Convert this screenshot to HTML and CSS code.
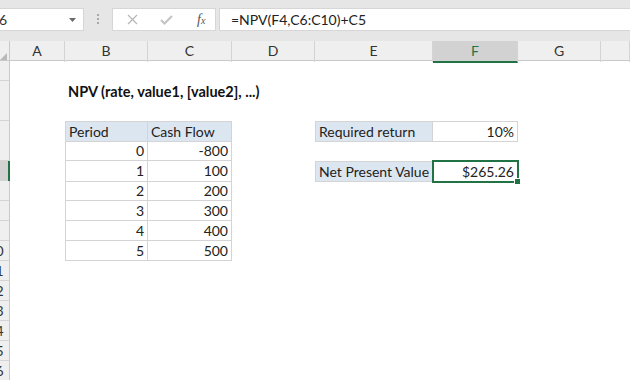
FILE: index.html
```html
<!DOCTYPE html>
<html>
<head>
  <meta charset="utf-8">
  <link rel="stylesheet" href="styles.css">
</head>
<body>
  <div class="toolbar">
    <div class="namebox">
      <span>F6</span>
      <svg class="drop" width="7" height="4" viewBox="0 0 7 4"><path d="M0 0h7L3.5 4z" fill="#6a6a6a"/></svg>
    </div>
    <div class="grip">
      <i></i><i></i><i></i>
    </div>
    <div class="fn-buttons">
      <svg width="11" height="11" viewBox="0 0 11 11"><path d="M1 1l9 9M10 1l-9 9" stroke="#b8b8b8" stroke-width="1.3" fill="none"/></svg>
      <svg width="13" height="10" viewBox="0 0 13 10"><path d="M1 5l3.5 3.5L12 1" stroke="#c2c2c2" stroke-width="2" fill="none"/></svg>
      <span class="fx">f<small>x</small></span>
    </div>
    <div class="formula">=NPV(F4,C6:C10)+C5</div>
  </div>

  <div class="sheet">
    <div class="row colheads">
      <div class="corner"><svg width="7" height="7" viewBox="0 0 7 7"><path d="M7 0v7H0z" fill="#b9b9b9"/></svg></div>
      <div class="ch">A</div>
      <div class="ch">B</div>
      <div class="ch">C</div>
      <div class="ch">D</div>
      <div class="ch">E</div>
      <div class="ch selected">F</div>
      <div class="ch">G</div>
      <div class="ch"></div>
    </div>

    <div class="row"><div class="rh"><span>1</span></div></div>
    <div class="row">
      <div class="rh"><span>2</span></div>
      <div class="cell col-b title">NPV (rate, value1, [value2], ...)</div>
    </div>
    <div class="row"><div class="rh"><span>3</span></div></div>
    <div class="row">
      <div class="rh"><span>4</span></div>
      <div class="cell col-b tb tb-l tb-t hd">Period</div>
      <div class="cell col-c tb tb-t hd">Cash Flow</div>
      <div class="cell col-e tb tb-l tb-t hd">Required return</div>
      <div class="cell col-f tb tb-t num">10%</div>
    </div>
    <div class="row">
      <div class="rh"><span>5</span></div>
      <div class="cell col-b tb tb-l num">0</div>
      <div class="cell col-c tb num">-800</div>
    </div>
    <div class="row">
      <div class="rh selected"><span>6</span></div>
      <div class="cell col-b tb tb-l num">1</div>
      <div class="cell col-c tb num">100</div>
      <div class="cell col-e tb tb-l tb-t hd">Net Present Value</div>
      <div class="cell col-f tb tb-t num active">$265.26<i class="handle"></i></div>
    </div>
    <div class="row">
      <div class="rh"><span>7</span></div>
      <div class="cell col-b tb tb-l num">2</div>
      <div class="cell col-c tb num">200</div>
    </div>
    <div class="row">
      <div class="rh"><span>8</span></div>
      <div class="cell col-b tb tb-l num">3</div>
      <div class="cell col-c tb num">300</div>
    </div>
    <div class="row">
      <div class="rh"><span>9</span></div>
      <div class="cell col-b tb tb-l num">4</div>
      <div class="cell col-c tb num">400</div>
    </div>
    <div class="row">
      <div class="rh"><span>10</span></div>
      <div class="cell col-b tb tb-l num">5</div>
      <div class="cell col-c tb num">500</div>
    </div>
    <div class="row"><div class="rh"><span>11</span></div></div>
    <div class="row"><div class="rh"><span>12</span></div></div>
    <div class="row"><div class="rh"><span>13</span></div></div>
    <div class="row"><div class="rh"><span>14</span></div></div>
    <div class="row"><div class="rh"><span>15</span></div></div>
    <div class="row"><div class="rh"><span>16</span></div></div>
  </div>
</body>
</html>
```

FILE: styles.css
```css
body {
  margin: 0;
  width: 630px;
  height: 380px;
  overflow: hidden;
  font-family: Lato, "Liberation Sans", sans-serif;
  font-size: 14px;
  color: #222;
  background: #fff;
}

/* formula bar */

.toolbar {
  display: flex;
  align-items: flex-start;
  height: 41px;
  padding-top: 8px;
  box-sizing: border-box;
  background: #e6e6e6;
}

.namebox {
  display: flex;
  align-items: center;
  justify-content: space-between;
  width: 101px;
  height: 23px;
  margin-left: -17px;
  padding: 0 7px;
  box-sizing: border-box;
  background: #fff;
  border: 1px solid #d6d6d6;
  font-size: 14px;
  color: #333;
}

.grip {
  display: flex;
  flex-direction: column;
  gap: 2px;
  margin: 6px 0 0 13px;
}

.grip i {
  width: 2px;
  height: 2px;
  background: #a8a8a8;
}

.fn-buttons {
  display: flex;
  align-items: center;
  height: 23px;
  width: 104px;
  margin-left: 13px;
  padding-left: 14px;
  box-sizing: border-box;
  background: #fff;
  border: 1px solid #d6d6d6;
  gap: 22px;
}

.fx {
  font-family: "Liberation Serif", serif;
  font-style: italic;
  font-size: 14px;
  color: #555;
  margin-left: 2px;
}

.fx small {
  font-size: 10px;
}

.formula {
  flex: 1;
  height: 23px;
  margin-left: 3px;
  padding-left: 11px;
  box-sizing: border-box;
  background: #fff;
  border: 1px solid #d6d6d6;
  border-right: none;
  font-size: 14px;
  line-height: 21px;
  color: #222;
}

/* sheet grid */

.row {
  display: grid;
  grid-template-columns: 10px 55px 83px 84px 83px 118px 85px 83px 1fr;
  height: 20px;
}

.colheads {
  background: #efefef;
  border-bottom: 1px solid #c9c9c9;
  box-sizing: border-box;
}

.corner {
  display: flex;
  align-items: flex-end;
  justify-content: flex-end;
  padding: 0 2px 2px 0;
  border-right: 1px solid #c9c9c9;
}

.ch {
  text-align: center;
  line-height: 20px;
  color: #333;
  border-right: 1px solid #d4d4d4;
}

.ch.selected {
  background: #d2d2d2;
  color: #217346;
  border-bottom: 2px solid #217346;
  margin-bottom: -1px;
}

.rh {
  display: flex;
  justify-content: flex-end;
  overflow: hidden;
  background: #efefef;
  border-right: 1px solid #c9c9c9;
  border-bottom: 1px solid #d4d4d4;
  line-height: 20px;
  color: #333;
}

.rh span {
  flex: 0 0 27px;
  text-align: center;
}

.rh.selected {
  background: #d2d2d2;
  border-right: 2px solid #217346;
}

.col-b { grid-column: 3; }
.col-c { grid-column: 4; }
.col-e { grid-column: 6; }
.col-f { grid-column: 7; }

.cell {
  padding: 0 3px;
  line-height: 19px;
  white-space: nowrap;
  box-sizing: border-box;
}

.title {
  font-weight: bold;
  font-size: 14.5px;
  line-height: 21px;
  color: #111;
}

.num {
  text-align: right;
}

.tb {
  border-right: 1px solid #d4d4d4;
  border-bottom: 1px solid #d4d4d4;
}

.tb-l {
  border-left: 1px solid #d4d4d4;
}

.tb-t {
  border-top: 1px solid #d4d4d4;
}

.hd {
  background: #dce6f1;
}

.active {
  position: relative;
  outline: 2px solid #217346;
  outline-offset: -1px;
}

.handle {
  position: absolute;
  right: -4px;
  bottom: -4px;
  width: 5px;
  height: 5px;
  background: #217346;
  border: 1px solid #fff;
}
```
